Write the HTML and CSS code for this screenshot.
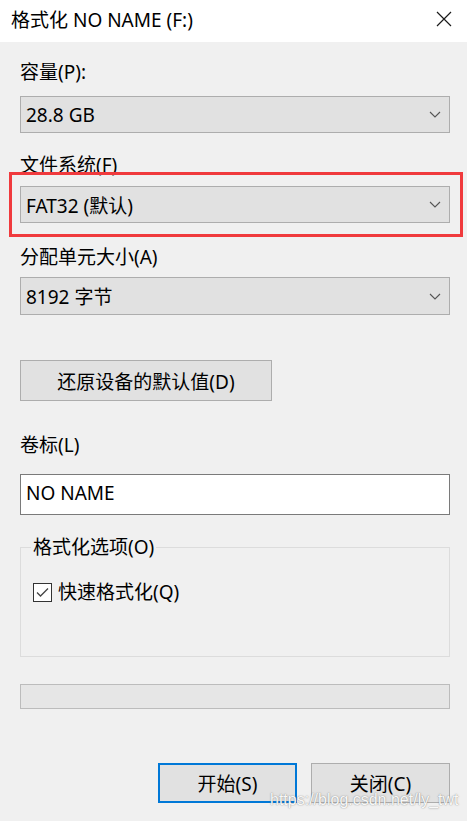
FILE: index.html
```html
<!DOCTYPE html>
<html lang="zh-CN">
<head>
<meta charset="utf-8">
<title>格式化 NO NAME (F:)</title>
<link rel="stylesheet" href="styles.css">
</head>
<body>
<div class="dialog">
  <div class="titlebar">
    <span class="title">格式化 NO NAME (F:)</span>
    <svg class="close" width="16" height="16" viewBox="0 0 16 16"><path d="M1 1 L15 15 M15 1 L1 15" stroke="#1a1a1a" stroke-width="1.2" fill="none"/></svg>
  </div>
  <div class="content">
    <div class="label l1">容量(P):</div>
    <div class="combo c1"><span>28.8 GB</span><svg class="chev" width="12" height="7" viewBox="0 0 12 7"><path d="M1 1 L6 6 L11 1" stroke="#555" stroke-width="1.1" fill="none"/></svg></div>

    <div class="label l2">文件系统(F)</div>
    <div class="hl-wrap">
      <div class="combo c2"><span>FAT32 (默认)</span><svg class="chev" width="12" height="7" viewBox="0 0 12 7"><path d="M1 1 L6 6 L11 1" stroke="#555" stroke-width="1.1" fill="none"/></svg></div>
      <div class="highlight"></div>
    </div>

    <div class="label l3">分配单元大小(A)</div>
    <div class="combo c3"><span>8192 字节</span><svg class="chev" width="12" height="7" viewBox="0 0 12 7"><path d="M1 1 L6 6 L11 1" stroke="#555" stroke-width="1.1" fill="none"/></svg></div>

    <div class="btn reset">还原设备的默认值(D)</div>

    <div class="label l4">卷标(L)</div>
    <div class="textbox">NO NAME</div>

    <div class="group">
      <span class="legend">格式化选项(O)</span>
      <div class="check-row">
        <span class="checkbox"><svg width="13" height="11" viewBox="0 0 13 11"><path d="M1 5.5 L4.5 9 L12 1.5" stroke="#444" stroke-width="1.3" fill="none"/></svg></span>
        <span class="check-label">快速格式化(Q)</span>
      </div>
    </div>

    <div class="progress"></div>

    <div class="actions">
      <div class="btn action primary">开始(S)</div>
      <div class="btn action">关闭(C)</div>
    </div>
  </div>
  <div class="watermark">https://blog.csdn.net/ly_twt</div>
</div>
</body>
</html>
```

FILE: styles.css
```css
html, body {
  margin: 0;
  padding: 0;
}
body {
  background: #f0f0f0;
  font-family: "Noto Sans", "Noto Sans CJK SC", sans-serif;
  font-size: 19px;
  color: #000;
}
.dialog {
  position: relative;
  width: 467px;
  height: 821px;
  background: #f0f0f0;
  overflow: hidden;
}
.titlebar {
  height: 42px;
  background: #fff;
  display: flex;
  align-items: center;
  justify-content: space-between;
  padding: 0 15px 0 11px;
  box-sizing: border-box;
}
.title {
  font-size: 19px;
  line-height: 22px;
  margin-top: -3px;
}
.close {
  display: block;
  margin-top: -4px;
}
.content {
  padding: 0 17px 0 20px;
  display: flex;
  flex-direction: column;
}
.label {
  height: 22px;
  line-height: 22px;
}
.l1 { margin-top: 19px; }
.l2 { margin-top: 21px; }
.l3 { margin-top: 23px; }
.l4 { margin-top: 33px; }
.combo {
  height: 37px;
  box-sizing: border-box;
  background: #e1e1e1;
  border: 1px solid #adadad;
  display: flex;
  align-items: center;
  justify-content: space-between;
  padding: 0 8px 0 5px;
}
.chev { display: block; }
.c1 { margin-top: 13px; }
.hl-wrap {
  position: relative;
  margin-top: 10px;
}
.c3 { margin-top: 9px; height: 38px; }
.highlight {
  position: absolute;
  left: -11px;
  right: -13px;
  top: -14px;
  bottom: -14px;
  border: 3px solid #f03a3d;
  pointer-events: none;
}
.btn {
  box-sizing: border-box;
  background: #e1e1e1;
  border: 1px solid #adadad;
  display: flex;
  align-items: center;
  justify-content: center;
}
.reset {
  margin-top: 45px;
  width: 252px;
  height: 41px;
}
.textbox {
  margin-top: 18px;
  height: 41px;
  box-sizing: border-box;
  background: #fff;
  border: 1px solid #7a7a7a;
  padding: 0 5px 4px;
  display: flex;
  align-items: center;
}
.group {
  margin-top: 32px;
  height: 110px;
  box-sizing: border-box;
  border: 1px solid #dcdcdc;
  padding: 0 0 0 12px;
  display: flex;
  flex-direction: column;
  align-items: flex-start;
}
.legend {
  margin-top: -12px;
  margin-left: -2px;
  padding: 0 2px;
  background: #f0f0f0;
  line-height: 22px;
}
.check-row {
  margin-top: 23px;
  display: flex;
  align-items: center;
  gap: 6px;
}
.checkbox {
  width: 19px;
  height: 19px;
  box-sizing: border-box;
  border: 1px solid #333;
  background: #fff;
  display: flex;
  align-items: center;
  justify-content: center;
}
.check-label {
  line-height: 22px;
}
.progress {
  margin-top: 27px;
  height: 25px;
  box-sizing: border-box;
  background: #e6e6e6;
  border: 1px solid #bcbcbc;
}
.actions {
  margin-top: 54px;
  display: flex;
  justify-content: flex-end;
  gap: 14px;
}
.action {
  width: 139px;
  height: 40px;
}
.primary {
  border: 2px solid #0078d7;
}
.watermark {
  position: absolute;
  left: 270px;
  top: 791px;
  font-family: "Liberation Sans", Arial, sans-serif;
  font-size: 16px;
  color: rgba(255, 255, 255, 0.95);
  text-shadow: 0 0 1px rgba(90, 90, 90, 0.6), 0 0 2px rgba(120, 120, 120, 0.4);
}
```
